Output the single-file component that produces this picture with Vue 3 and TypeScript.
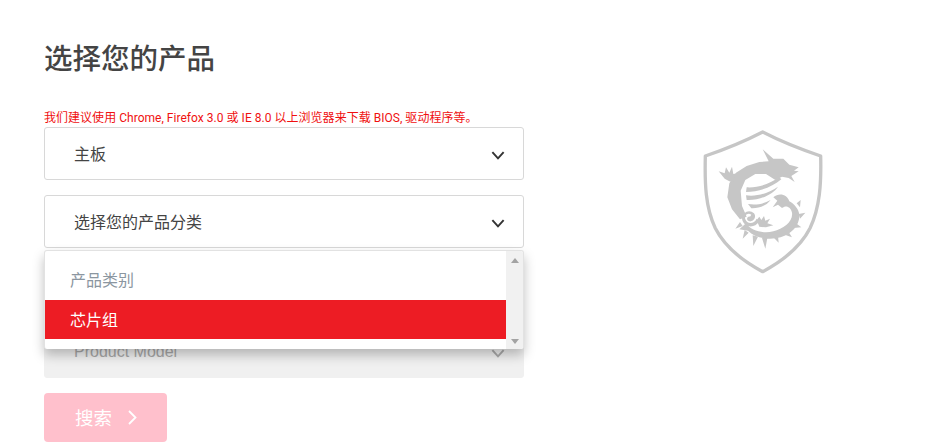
<template>
  <div class="page">
    <section class="finder">
      <h2 class="title">选择您的产品</h2>
      <p class="notice">我们建议使用 Chrome, Firefox 3.0 或 IE 8.0 以上浏览器来下载 BIOS, 驱动程序等。</p>

      <div class="field">
        <span>主板</span>
        <svg class="chevron" viewBox="0 0 12 8"><path d="M1 1l5 5.5L11 1" /></svg>
      </div>

      <div class="field open">
        <span>选择您的产品分类</span>
        <svg class="chevron" viewBox="0 0 12 8"><path d="M1 1l5 5.5L11 1" /></svg>
        <div class="menu">
          <ul class="options">
            <li
              v-for="option in options"
              :key="option"
              class="option"
              :class="{ active: option === selected, muted: option === options[0] }"
            >{{ option }}</li>
          </ul>
          <div class="scrollbar">
            <i class="arrow up"></i>
            <i class="arrow down"></i>
          </div>
        </div>
      </div>

      <div class="field disabled"></div>

      <div class="field disabled model">
        <span class="model-name">Product Model</span>
        <svg class="chevron" viewBox="0 0 12 8"><path d="M1 1l5 5.5L11 1" /></svg>
      </div>

      <button class="search" type="button" disabled>
        <span>搜索</span>
        <svg viewBox="0 0 9 15"><path d="M1 1l6.5 6.5L1 14" /></svg>
      </button>
    </section>

    <aside class="brand">
      <svg class="shield" viewBox="0 0 435 480">
        <path class="outline" d="M218 36C160 66 105 88 46 108C44 190 46 262 76 325C106 384 160 424 218 455C276 424 330 384 360 325C390 262 394 190 392 108C333 88 276 66 218 36Z" />
        <g class="dragon">
          <path d="M218 88L250 116L280 116L298 134L326 142L312 152L326 154L304 168L314 186L296 174L276 170L256 180L228 162L196 162L166 180L152 212L156 258L170 290L150 298L126 268L112 232L118 190L138 158L170 138L208 126L236 124Z" />
          <path d="M170 202C204 204 238 192 268 172L274 178C246 202 206 216 168 216Z" />
          <path d="M168 226C198 230 232 222 264 200C248 224 208 242 170 240Z" />
          <path d="M174 252C198 256 220 252 242 240C228 258 206 266 184 265Z" />
          <path d="M118 184L104 176L86 154L104 160L108 142L118 158L126 140L130 162L142 160L128 186Z" />
          <path d="M250 232C268 216 292 224 298 244C312 252 326 266 328 284C330 314 306 342 272 352C236 362 196 354 174 332L148 328L168 310C182 332 220 342 250 334C280 326 310 306 306 278C302 260 288 254 276 264L264 254L248 262L262 242Z" />
          <path d="M320 250L332 240L330 262Z M326 282L346 278L330 296Z M318 310L334 322L310 324Z M296 336L306 352L284 344Z M264 348L266 368L250 352Z M232 354L226 386L216 354Z M204 350L190 378L188 346Z M176 338L158 356L164 330Z M158 318L136 326L150 306Z" />
          <path d="M156 296C158 276 178 266 192 280C200 290 192 306 178 304C168 302 170 288 180 290L184 284C172 276 162 288 166 298C170 312 192 314 200 296L206 306C196 324 162 326 156 296Z" />
          <path d="M200 300L208 290L214 300L222 288L226 302L240 296L232 310L250 316L228 322L208 320Z" />
        </g>
      </svg>
    </aside>
  </div>
</template>

<script setup lang="ts">
const options: string[] = ['产品类别', '芯片组']
const selected = '芯片组'
</script>

<style>
html,
body {
  margin: 0;
  background: #fff;
  overflow: hidden;
}
</style>

<style scoped>
.page {
  display: flex;
  height: 447px;
  padding-left: 44px;
  box-sizing: border-box;
  font-family: Roboto, "Noto Sans CJK SC", sans-serif;
  color: #444;
}

.finder {
  width: 480px;
  flex-shrink: 0;
}

.title {
  margin: 39px 0 0;
  font-size: 28.5px;
  line-height: 42px;
  font-weight: 500;
  color: #444;
}

.notice {
  margin: 28px 0 0;
  font-size: 12px;
  line-height: 18px;
  letter-spacing: 0.03px;
  color: #f01010;
  white-space: nowrap;
}

.field {
  position: relative;
  display: flex;
  align-items: center;
  justify-content: space-between;
  height: 53px;
  margin-bottom: 15px;
  padding: 0 18px 2px 29px;
  box-sizing: border-box;
  border: 1px solid #d8d8d8;
  border-radius: 3px;
  background: #fff;
  font-size: 16px;
}

.chevron {
  width: 14px;
  height: 9px;
  margin-top: 6px;
  fill: none;
  stroke: #333;
  stroke-width: 1.7;
}

.field.disabled {
  border-color: #f0f0f0;
  background: #f0f0f0;
  color: #a8a8a8;
}

.field.disabled .chevron {
  stroke: #aaa;
}

.field.model {
  margin-top: -6px;
}

.model-name {
  margin-top: 3px;
  font-family: "Liberation Sans", sans-serif;
}

.menu {
  position: absolute;
  top: 54px;
  left: -1px;
  right: -1px;
  z-index: 2;
  display: flex;
  height: 99px;
  box-sizing: border-box;
  border: 1px solid #e2e2e2;
  border-bottom: 0;
  border-radius: 3px;
  background: #fff;
  box-shadow: 0 6px 12px rgba(0, 0, 0, 0.25);
  overflow: hidden;
}

.options {
  flex: 1;
  margin: 0;
  padding: 10px 0;
  list-style: none;
}

.option {
  height: 39px;
  padding-left: 25px;
  line-height: 39px;
  font-size: 16px;
}

.option.muted {
  color: #8b96a0;
}

.option.active {
  background: #ed1c24;
  color: #fff;
  line-height: 41px;
}

.scrollbar {
  display: flex;
  flex-direction: column;
  justify-content: space-between;
  align-items: center;
  width: 17px;
  padding: 7px 0 5px;
  box-sizing: border-box;
  background: #f1f1f1;
}

.arrow {
  width: 0;
  height: 0;
  border-left: 4px solid transparent;
  border-right: 4px solid transparent;
}

.arrow.up {
  border-bottom: 5px solid #a3a3a3;
}

.arrow.down {
  border-top: 5px solid #a3a3a3;
}

.search {
  display: flex;
  align-items: center;
  gap: 16px;
  width: 123px;
  height: 49px;
  padding: 0 0 2px 31px;
  border: 0;
  border-radius: 4px;
  background: #ffc0cc;
  color: #fff;
  font-family: inherit;
  font-size: 18.5px;
}

.search svg {
  width: 9px;
  height: 15px;
  margin-top: 2px;
  fill: none;
  stroke: #fff;
  stroke-width: 1.8;
}

.brand {
  flex: 1;
  display: flex;
  padding: 120px 0 0 166px;
}

.shield {
  width: 145px;
  height: 160px;
}

.outline {
  fill: none;
  stroke: #c6c6c6;
  stroke-width: 10;
  stroke-linejoin: round;
}

.dragon {
  fill: #c6c6c6;
}
</style>
